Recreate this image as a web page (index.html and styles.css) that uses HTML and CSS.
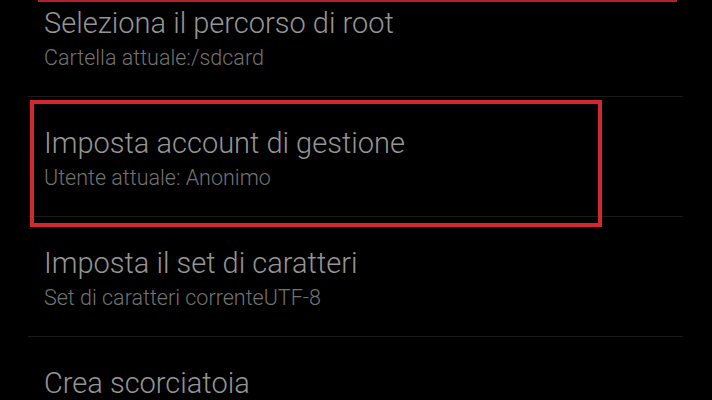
FILE: index.html
```html
<!DOCTYPE html>
<html lang="it">
  <head>
    <meta charset="UTF-8" />
    <meta name="viewport" content="width=device-width, initial-scale=1.0" />
    <title>Impostazioni</title>
    <link rel="stylesheet" href="styles.css">
  </head>
  <body>
    <div class="screen">
      <div class="prev-mark"></div>

      <ul class="settings">
        <li class="setting">
          <div class="setting__title">Seleziona il percorso di root</div>
          <div class="setting__summary">Cartella attuale:/sdcard</div>
        </li>
        <li class="setting setting--marked">
          <div class="setting__title">Imposta account di gestione</div>
          <div class="setting__summary">Utente attuale: Anonimo</div>
          <div class="highlight"></div>
        </li>
        <li class="setting">
          <div class="setting__title">Imposta il set di caratteri</div>
          <div class="setting__summary">Set di caratteri correnteUTF-8</div>
        </li>
        <li class="setting">
          <div class="setting__title">Crea scorciatoia</div>
          <div class="setting__summary">&nbsp;</div>
        </li>
      </ul>
    </div>
  </body>
</html>
```

FILE: styles.css
```css
* {
  margin: 0;
  padding: 0;
  box-sizing: border-box;
}

body {
  background: #000;
  font-family: Roboto, "Liberation Sans", sans-serif;
  overflow: hidden;
}

.screen {
  position: relative;
  width: 712px;
  height: 400px;
  overflow: hidden;
}

/* bottom edge of the box around the previous item */
.prev-mark {
  position: absolute;
  top: 0;
  left: 38px;
  width: 639px;
  height: 2px;
  background: #b3222a;
}

.settings {
  list-style: none;
  margin: -23px 0 0 28px;
  width: 655px;
}

.setting {
  position: relative;
  height: 120px;
  padding: 30px 16px 0;
  border-bottom: 1px solid #1b1b1b;
}

.setting__title {
  font-size: 29px;
  font-weight: 300;
  line-height: 32px;
  color: #959595;
  white-space: nowrap;
}

.setting__summary {
  margin-top: 7px;
  font-size: 21.5px;
  font-weight: 300;
  line-height: 24px;
  color: #737373;
  white-space: nowrap;
}

.highlight {
  position: absolute;
  top: 3px;
  left: 2px;
  width: 572px;
  height: 127px;
  border: 4px solid #d3282f;
}
```
